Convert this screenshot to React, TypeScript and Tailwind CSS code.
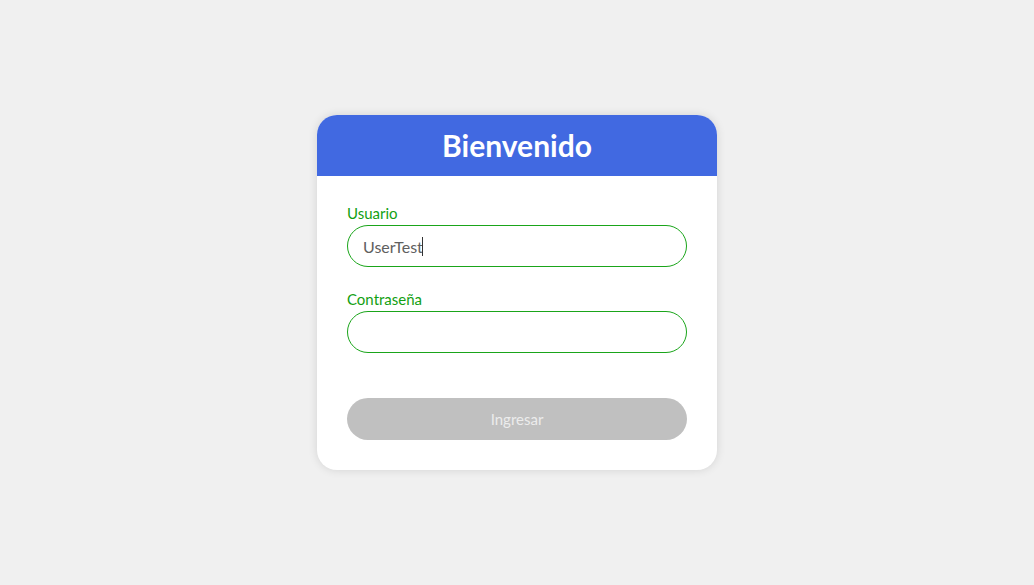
import { useState } from "react";

function App() {
  const [usuario, setUsuario] = useState("UserTest");
  const [password, setPassword] = useState("");

  const canSubmit = usuario.length > 0 && password.length > 0;

  return (
    <div
      className="min-h-screen w-full bg-[#f0f0f0] flex items-center justify-center"
      style={{ fontFamily: "Lato, 'Noto Sans', sans-serif" }}
    >
      <div className="w-[400px] bg-white rounded-[20px] overflow-hidden shadow-[0_0_10px_rgba(0,0,0,0.12)]">
        {/* Header */}
        <div className="h-[61px] bg-[#4169e1] flex items-center justify-center pb-[2px]">
          <h1 className="text-[30px] font-bold text-white leading-none">
            Bienvenido
          </h1>
        </div>

        {/* Form */}
        <form
          className="px-[30px] pt-[27px] pb-[30px]"
          onSubmit={(e) => e.preventDefault()}
        >
          <div>
            <label className="block h-[22px] text-[15px] leading-[20px] text-[#12a012]">
              Usuario
            </label>
            <div className="relative">
              <input
                type="text"
                value={usuario}
                onChange={(e) => setUsuario(e.target.value)}
                className="w-full h-[42px] rounded-full border border-[#1aa51a] px-[15px] text-[16px] text-[#606060] outline-none"
              />
              {/* caret */}
              <span className="absolute left-[75px] top-[12px] h-[19px] w-px bg-[#333]" />
            </div>
          </div>

          <div className="mt-[22px]">
            <label className="block h-[22px] text-[15px] leading-[20px] text-[#12a012]">
              Contraseña
            </label>
            <input
              type="password"
              value={password}
              onChange={(e) => setPassword(e.target.value)}
              className="w-full h-[42px] rounded-full border border-[#1aa51a] px-[15px] text-[16px] text-[#606060] outline-none"
            />
          </div>

          <button
            type="submit"
            disabled={!canSubmit}
            className="mt-[45px] w-full h-[42px] rounded-full bg-[#c0c0c0] text-[15px] text-[#ececec]"
          >
            Ingresar
          </button>
        </form>
      </div>
    </div>
  );
}

export default App;
